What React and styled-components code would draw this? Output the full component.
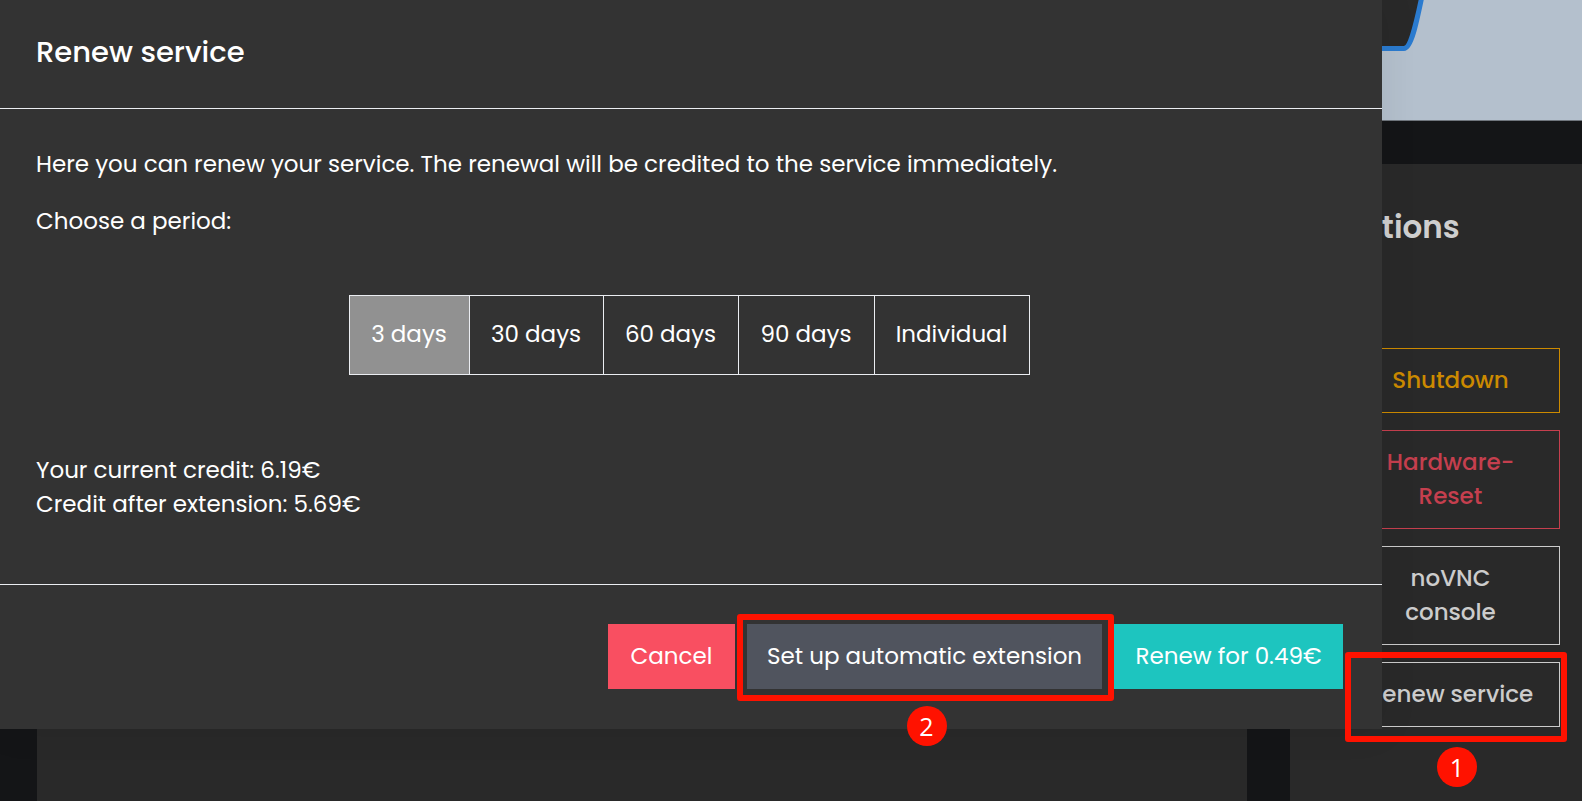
import React, { useState } from "react";
import styled, { createGlobalStyle } from "styled-components";

const GlobalStyle = createGlobalStyle`
  *, *::before, *::after { box-sizing: border-box; }
  body {
    margin: 0;
    background: #141517;
    color: #fff;
    font-family: Poppins, Inter, "Liberation Sans", sans-serif;
    font-size: 23px;
    line-height: 34px;
    overflow: hidden;
  }
  button { font: inherit; cursor: pointer; }
  h1, h2, p { margin: 0; }
`;

const Page = styled.div`
  position: relative;
  display: flex;
  flex-direction: column;
  gap: 43px;
  min-height: 100vh;
`;

const ChartCard = styled.section`
  display: flex;
  justify-content: flex-end;
  height: 121px;
  margin-left: 37px;
  background: #292929;
  border-bottom: 1px solid #70767d;
`;

const Columns = styled.div`
  flex: 1;
  display: grid;
  grid-template-columns: 1fr 292px;
  gap: 43px;
  padding-left: 37px;
`;

const Card = styled.section`
  background: #292929;
`;

const ActionsCard = styled(Card)`
  padding: 41px 22px 40px 51px;
`;

const ActionsTitle = styled.h2`
  margin-bottom: 99px;
  color: #cfcfcf;
  font-size: 31px;
  font-weight: 600;
  line-height: 44px;
`;

const ActionList = styled.div`
  display: flex;
  flex-direction: column;
  gap: 17px;
`;

const Marked = styled.div`
  position: relative;
  display: grid;
`;

const ActionButton = styled.button`
  padding: 14px 24px 15px;
  color: ${(p) => p.$color};
  background: transparent;
  border: 1px solid ${(p) => p.$color};
  font-weight: 500;
  white-space: ${(p) => (p.$nowrap ? "nowrap" : "normal")};
`;

const Marker = styled.div`
  position: absolute;
  z-index: 2;
  inset: ${(p) => p.$inset};
  border: 6px solid #ff1200;
  border-radius: 3px;
  pointer-events: none;
`;

const Badge = styled.span`
  position: absolute;
  top: calc(100% + 11px);
  left: calc(50% - 19px);
  width: 40px;
  height: 40px;
  border-radius: 50%;
  background: #ff1200;
  color: #fff;
  font: 25px/40px "Open Sans", "Noto Sans", sans-serif;
  text-align: center;
`;

const Dialog = styled.form`
  position: absolute;
  z-index: 1;
  top: 0;
  left: 0;
  right: 200px;
  background: #333;
  box-shadow: 0 0 36px rgba(0, 0, 0, 0.08);
`;

const DialogHeader = styled.header`
  padding: 30px 36px 34px;
  border-bottom: 1px solid #ebedf2;
`;

const DialogTitle = styled.h1`
  font-size: 29px;
  font-weight: 500;
  line-height: 44px;
`;

const DialogBody = styled.div`
  display: flex;
  flex-direction: column;
  gap: 23px;
  padding: 38px 40px 63px 36px;
`;

const Periods = styled.div`
  display: flex;
  align-self: center;
  margin: 34px 0 55px;
  border: 1px solid #ebedf2;
`;

const Period = styled.label`
  min-width: ${(p) => p.$width}px;
  padding: 21px 16px 23px;
  text-align: center;
  white-space: nowrap;
  cursor: pointer;

  & + & { border-left: 1px solid #ebedf2; }
  &:has(input:checked) { background: #919191; }
`;

const PeriodInput = styled.input`
  position: absolute;
  opacity: 0;
  pointer-events: none;
`;

const DialogFooter = styled.footer`
  display: flex;
  justify-content: flex-end;
  gap: 12px;
  padding: 39px 39px 40px;
  border-top: 1px solid #ebedf2;
`;

const FooterButton = styled.button`
  min-width: ${(p) => p.$width}px;
  padding: 15px 16px 16px;
  border: 0;
  background: ${(p) => p.$fill};
  color: #fff;
  white-space: nowrap;
`;

const periods = [
  { label: "3 days", width: 119 },
  { label: "30 days", width: 134 },
  { label: "60 days", width: 135 },
  { label: "90 days", width: 136 },
  { label: "Individual", width: 155 },
];

export default function App() {
  const [period, setPeriod] = useState("3 days");

  return (
    <>
      <GlobalStyle />
      <Page>
        <ChartCard>
          <svg width="240" height="120" viewBox="0 0 240 120" aria-hidden="true">
            <path d="M0 48.5H62C69 48.5 74 25 80 -4H240V120H0Z" fill="#b4c0cd" />
            <path d="M0 48.5H62C69 48.5 74 25 80 -4" fill="none" stroke="#2b7bcf" strokeWidth="5" />
          </svg>
        </ChartCard>
        <Columns>
          <Card />
          <ActionsCard>
            <ActionsTitle>Actions</ActionsTitle>
            <ActionList>
              <ActionButton type="button" $color="#cc8a00">Shutdown</ActionButton>
              <ActionButton type="button" $color="#c53f4e">Hardware-<br />Reset</ActionButton>
              <ActionButton type="button" $color="#cccccc">noVNC<br />console</ActionButton>
              <Marked>
                <ActionButton type="button" $color="#cccccc" $nowrap>Renew service</ActionButton>
                <Marker $inset="-10px -7px -15px 4px"><Badge>1</Badge></Marker>
              </Marked>
            </ActionList>
          </ActionsCard>
        </Columns>

        <Dialog role="dialog" aria-labelledby="renew-title" onSubmit={(e) => e.preventDefault()}>
          <DialogHeader>
            <DialogTitle id="renew-title">Renew service</DialogTitle>
          </DialogHeader>
          <DialogBody>
            <p>Here you can renew your service. The renewal will be credited to the service immediately.</p>
            <p id="period-label">Choose a period:</p>
            <Periods role="radiogroup" aria-labelledby="period-label">
              {periods.map(({ label, width }) => (
                <Period key={label} $width={width}>
                  <PeriodInput
                    type="radio"
                    name="period"
                    checked={period === label}
                    onChange={() => setPeriod(label)}
                  />
                  {label}
                </Period>
              ))}
            </Periods>
            <p>
              Your current credit: 6.19€
              <br />
              Credit after extension: 5.69€
            </p>
          </DialogBody>
          <DialogFooter>
            <FooterButton type="button" $fill="#f94f61" $width={127}>Cancel</FooterButton>
            <Marked>
              <FooterButton type="button" $fill="#50545e" $width={355}>Set up automatic extension</FooterButton>
              <Marker $inset="-10px -12px -12px -10px"><Badge>2</Badge></Marker>
            </Marked>
            <FooterButton type="submit" $fill="#1dc5bf" $width={229}>Renew for 0.49€</FooterButton>
          </DialogFooter>
        </Dialog>
      </Page>
    </>
  );
}
